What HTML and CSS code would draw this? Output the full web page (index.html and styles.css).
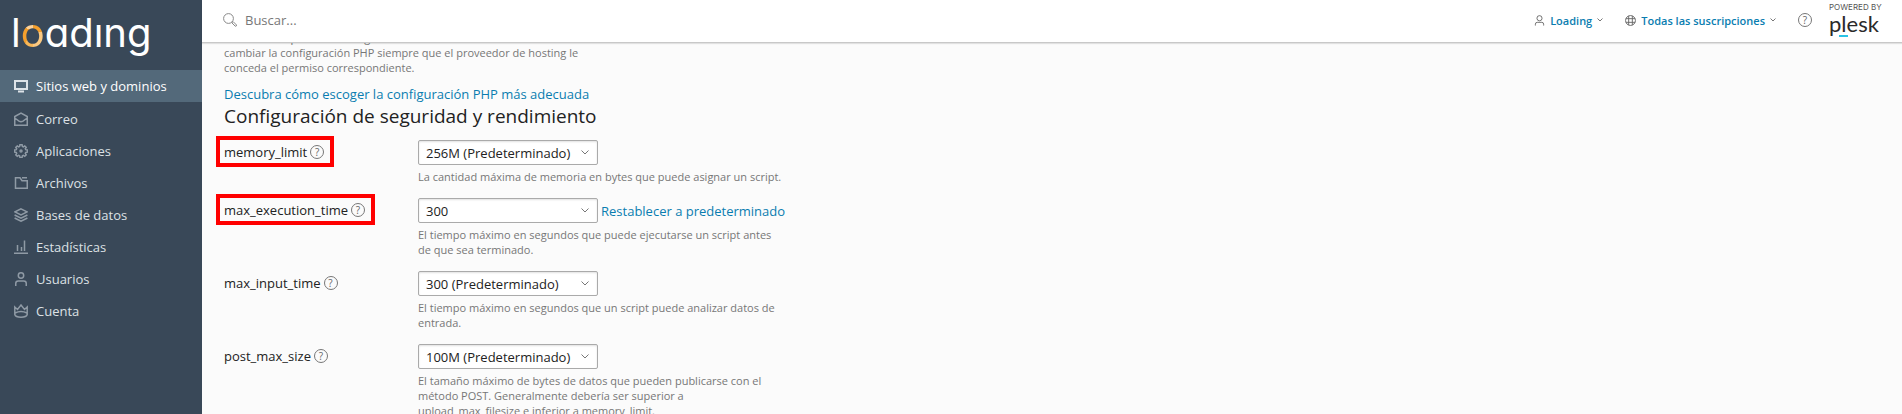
FILE: index.html
```html
<!DOCTYPE html>
<html lang="es">
<head>
    <meta charset="UTF-8">
    <meta name="viewport" content="width=device-width, initial-scale=1.0">
    <title>Configuración de PHP</title>
    <link rel="stylesheet" href="styles.css">
</head>
<body>
<aside class="sidebar">
    <a class="logo" href="#">l<span class="logo-ring">o</span>adıng</a>
    <nav class="nav">
        <a class="nav-item active" href="#">
            <svg class="icon" viewBox="0 0 14 14"><path d="M1 2h12v8H1zM4 12.500h6"/></svg>
            Sitios web y dominios
        </a>
        <a class="nav-item" href="#">
            <svg class="icon" viewBox="0 0 14 14"><path d="M.75 4.500v8.750h12.500V4.500L7 1zM.75 6L5 9.200q2 1.200 4 0L13.250 6"/></svg>
            Correo
        </a>
        <a class="nav-item" href="#">
            <svg class="icon" viewBox="0 0 14 14"><path d="M5.900.8h2.200l.3 1.600 1 .4 1.300-.9 1.500 1.500-.9 1.300.4 1 1.600.3v2.200l-1.600.3-.4 1 .9 1.300-1.500 1.500-1.300-.9-1 .4-.3 1.600H5.900l-.3-1.600-1-.4-1.300.9-1.500-1.500.9-1.300-.4-1L.7 8.200V6l1.600-.3.4-1-.9-1.300 1.500-1.500 1.300.9 1-.4z"/><circle cx="7" cy="7" r="1"/></svg>
            Aplicaciones
        </a>
        <a class="nav-item" href="#">
            <svg class="icon" viewBox="0 0 14 14"><path d="M1.500 1.750h4.500l2 3h5.250v7.500H1.500zM8 1.750h5"/></svg>
            Archivos
        </a>
        <a class="nav-item" href="#">
            <svg class="icon" viewBox="0 0 14 14"><path d="M7 .8l6 3-6 3-6-3zM.6 7L7 10.200 13.400 7M.6 10L7 13.200 13.400 10"/></svg>
            Bases de datos
        </a>
        <a class="nav-item" href="#">
            <svg class="icon" viewBox="0 0 14 14"><path d="M0 13.300h14M3.500 5v6M7.500 7v4M10.500.5V11"/></svg>
            Estadísticas
        </a>
        <a class="nav-item" href="#">
            <svg class="icon" viewBox="0 0 14 14"><circle cx="7" cy="3.500" r="2.700"/><path d="M1.750 14v-2.500q0-2.500 2.500-2.500h5.500q2.500 0 2.500 2.500V14"/></svg>
            Usuarios
        </a>
        <a class="nav-item" href="#">
            <svg class="icon" viewBox="0 0 14 14"><path d="M.8 3l2.700 2.500L7 1l3.500 4.500L13.200 3v7.500c-1 3.500-11.400 3.500-12.400 0zM1 9q6-3 12 0"/></svg>
            Cuenta
        </a>
    </nav>
</aside>
<div class="page">
    <header class="header">
        <form class="search">
            <svg class="search-icon" viewBox="0 0 14 14"><circle cx="5.500" cy="5.500" r="4.900"/><path d="M9 9.200l1-.7 3.500 3.500q.3 1.200-1.200 1.300L9 10z"/></svg>
            <input class="search-input" type="text" placeholder="Buscar..." aria-label="Buscar">
        </form>
        <div class="header-tools">
            <button class="menu-button" type="button">
                <svg class="menu-icon" viewBox="0 0 12 12"><circle cx="6" cy="3.500" r="2.800"/><path d="M1.500 11.500V10q0-2 2-2h5q2 0 2 2v1.500"/></svg>
                Loading
                <svg class="caret" viewBox="0 0 6 4"><path d="M.5.5L3 3 5.500.5"/></svg>
            </button>
            <button class="menu-button" type="button">
                <svg class="menu-icon" viewBox="0 0 12 12"><circle cx="6" cy="6" r="5.400"/><path d="M4 1v10M8 1v10M1 4h10M1 8h10"/></svg>
                Todas las suscripciones
                <svg class="caret" viewBox="0 0 6 4"><path d="M.5.5L3 3 5.500.5"/></svg>
            </button>
            <button class="help" type="button" aria-label="Ayuda">?</button>
            <a class="plesk" href="#">
                <span class="plesk-powered">POWERED BY</span>
                <span class="plesk-name">plesk</span>
            </a>
        </div>
    </header>
    <main class="content">
        <p class="intro">sitio web. Se permite con algún detalle<br>cambiar la configuración PHP siempre que el proveedor de hosting le<br>conceda el permiso correspondiente.</p>
        <a class="link" href="#">Descubra cómo escoger la configuración PHP más adecuada</a>
        <h2>Configuración de seguridad y rendimiento</h2>
        <form class="settings">
            <div class="form-row">
                <div class="form-label highlight">
                    <label for="memory_limit">memory_limit</label>
                    <button class="help" type="button" aria-label="Ayuda">?</button>
                </div>
                <div class="form-field">
                    <div class="control">
                        <div class="select">
                            <select id="memory_limit"><option>256M (Predeterminado)</option></select>
                            <svg class="select-arrow" viewBox="0 0 8 5"><path d="M.5.5L4 4 7.500.5"/></svg>
                        </div>
                    </div>
                    <p class="hint">La cantidad máxima de memoria en bytes que puede asignar un script.</p>
                </div>
            </div>
            <div class="form-row">
                <div class="form-label highlight">
                    <label for="max_execution_time">max_execution_time</label>
                    <button class="help" type="button" aria-label="Ayuda">?</button>
                </div>
                <div class="form-field">
                    <div class="control">
                        <div class="select">
                            <select id="max_execution_time"><option>300</option></select>
                            <svg class="select-arrow" viewBox="0 0 8 5"><path d="M.5.5L4 4 7.500.5"/></svg>
                        </div>
                        <a class="link" href="#">Restablecer a predeterminado</a>
                    </div>
                    <p class="hint">El tiempo máximo en segundos que puede ejecutarse un script antes<br>de que sea terminado.</p>
                </div>
            </div>
            <div class="form-row">
                <div class="form-label">
                    <label for="max_input_time">max_input_time</label>
                    <button class="help" type="button" aria-label="Ayuda">?</button>
                </div>
                <div class="form-field">
                    <div class="control">
                        <div class="select">
                            <select id="max_input_time"><option>300 (Predeterminado)</option></select>
                            <svg class="select-arrow" viewBox="0 0 8 5"><path d="M.5.5L4 4 7.500.5"/></svg>
                        </div>
                    </div>
                    <p class="hint">El tiempo máximo en segundos que un script puede analizar datos de entrada.</p>
                </div>
            </div>
            <div class="form-row">
                <div class="form-label">
                    <label for="post_max_size">post_max_size</label>
                    <button class="help" type="button" aria-label="Ayuda">?</button>
                </div>
                <div class="form-field">
                    <div class="control">
                        <div class="select">
                            <select id="post_max_size"><option>100M (Predeterminado)</option></select>
                            <svg class="select-arrow" viewBox="0 0 8 5"><path d="M.5.5L4 4 7.500.5"/></svg>
                        </div>
                    </div>
                    <p class="hint">El tamaño máximo de bytes de datos que pueden publicarse con el método POST. Generalmente debería ser superior a<br>upload_max_filesize e inferior a memory_limit.</p>
                </div>
            </div>
        </form>
    </main>
</div>
</body>
</html>
```
FILE: styles.css
```css
* {
    box-sizing: border-box;
}
body {
    display: flex;
    height: 100vh;
    margin: 0;
    overflow: hidden;
    font-family: "Open Sans", sans-serif;
    font-size: 13px;
    line-height: 20px;
    color: #222;
    background-color: #fbfbfb;
}
a {
    text-decoration: none;
}
button {
    font-family: inherit;
    cursor: pointer;
}
svg {
    fill: none;
    stroke: currentColor;
    flex-shrink: 0;
}

/* sidebar */
.sidebar {
    width: 202px;
    flex-shrink: 0;
    background-color: #394858;
}
.logo {
    display: block;
    height: 70px;
    padding: 8px 11px;
    font-family: Inter, sans-serif;
    font-size: 40px;
    font-weight: 400;
    line-height: 50px;
    font-feature-settings: "cv11";
    color: #fff;
}
.logo-ring {
    color: transparent;
    background: conic-gradient(#f5a02d 0 25%, #fbc980 25% 50%, #f9b858 50% 60%, #f5a02d 60% 85%, #fcd29a 85%);
    background-clip: text;
    -webkit-background-clip: text;
}
.nav-item {
    display: flex;
    align-items: center;
    gap: 8px;
    height: 32px;
    padding: 0 14px;
    color: #dde1e5;
}
.nav-item.active {
    margin-bottom: 1px;
    padding-bottom: 1px;
    color: #fff;
    background-color: #53697a;
}
.icon {
    width: 14px;
    height: 14px;
    stroke-width: 1.5;
    color: #8f9aa5;
}
.active .icon {
    stroke-width: 2;
    color: #dde3e8;
}

/* header */
.page {
    display: flex;
    flex-direction: column;
    flex: 1;
    min-width: 0;
}
.header {
    position: relative;
    z-index: 1;
    display: flex;
    align-items: center;
    justify-content: space-between;
    height: 43px;
    flex-shrink: 0;
    padding: 0 21px 2px;
    background-color: #fff;
    border-bottom: 1px solid #c8c8c8;
    box-shadow: 0 1px 1px rgba(0, 0, 0, 0.1);
}
.search {
    display: flex;
    align-items: center;
    gap: 8px;
}
.search-icon {
    width: 14px;
    height: 14px;
    color: #888;
}
.search-input {
    width: 300px;
    padding: 0;
    border: none;
    outline: none;
    background: none;
    font-family: inherit;
    font-size: 13px;
}
.search-input::placeholder {
    color: #777;
}
.header-tools {
    display: flex;
    align-items: center;
    gap: 17px;
}
.menu-button {
    display: flex;
    align-items: center;
    gap: 5px;
    margin-right: 5px;
    padding: 0;
    border: none;
    background: none;
    font-size: 11px;
    font-weight: 600;
    color: #0a7db0;
}
.menu-icon {
    width: 11px;
    height: 11px;
    color: #666;
}
.caret {
    width: 6px;
    height: 4px;
    color: #777;
}
.help {
    width: 14px;
    height: 14px;
    padding: 0;
    border: 1px solid #777;
    border-radius: 50%;
    background: none;
    font-size: 10px;
    line-height: 12px;
    color: #666;
}
.plesk {
    display: flex;
    flex-direction: column;
    width: 52px;
    font-family: Lato, sans-serif;
    color: #2a2a2a;
}
.plesk-powered {
    font-family: Inter, sans-serif;
    font-size: 8px;
    line-height: 8px;
    color: #555;
    white-space: nowrap;
}
.plesk-name {
    font-size: 22px;
    line-height: 26px;
    background: linear-gradient(#2bc4e6, #2bc4e6) 10px 100% / 9px 2px no-repeat;
}

/* content */
.content {
    flex: 1;
    min-height: 0;
    margin-top: -13px;
    padding: 0 22px;
    overflow: hidden;
}
.intro,
.hint {
    max-width: 372px;
    margin: 0;
    font-size: 11px;
    line-height: 15px;
    color: #777;
}
.intro {
    margin-bottom: 9px;
}
.link {
    color: #0a7db0;
}
h2 {
    margin: 0 0 12px;
    font-size: 19px;
    font-weight: 400;
    line-height: 24px;
}
.settings {
    display: flex;
    flex-direction: column;
    gap: 14px;
}
.form-row {
    display: grid;
    grid-template-columns: 194px 1fr;
    align-items: start;
}
.form-label {
    position: relative;
    display: flex;
    align-items: center;
    justify-self: start;
    gap: 3px;
    height: 23px;
}
.highlight::after {
    content: "";
    position: absolute;
    inset: -4px -10px -4px -8px;
    border: 4px solid #f00;
    pointer-events: none;
}
.control {
    display: flex;
    align-items: center;
    gap: 3px;
    margin-bottom: 4px;
}
.select {
    position: relative;
    width: 180px;
}
select {
    display: block;
    width: 100%;
    height: 25px;
    padding: 0 7px;
    appearance: none;
    border: 1px solid #aaa;
    border-radius: 2px;
    background-color: #fff;
    box-shadow: inset 0 1px 2px rgba(0, 0, 0, 0.12);
    font-family: inherit;
    font-size: 13px;
    color: #222;
}
.select-arrow {
    position: absolute;
    top: 10px;
    right: 9px;
    width: 8px;
    height: 5px;
    color: #777;
    pointer-events: none;
}
```
